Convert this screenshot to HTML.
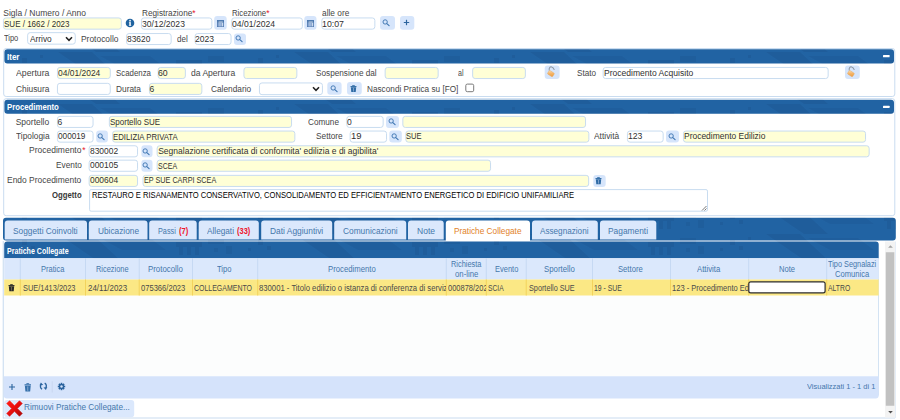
<!DOCTYPE html>
<html lang="it"><head><meta charset="utf-8"><title>Pratiche Collegate</title>
<style>
html,body{margin:0;padding:0;background:#fff}
body{width:900px;height:420px;position:relative;overflow:hidden;font-family:"Liberation Sans", sans-serif;}
.b{position:absolute;display:block}
.t{position:absolute;white-space:nowrap;line-height:12px;height:12px;overflow:visible}
.c{overflow:hidden}
.t span{display:inline-block;transform-origin:0 50%}
b.r{color:#e8112d}
</style></head>
<body>
<svg class="b" style="left:0;top:0" width="900" height="420" viewBox="0 0 900 420">
<defs><pattern id="tx" width="236" height="26" patternUnits="userSpaceOnUse"><path d="M58 0 L92 0 L120 26 L96 26 Z" fill="#0b2a55" opacity=".10"/><path d="M100 4 L150 4 L166 16 L122 16 Z" fill="#0b2a55" opacity=".08"/><path d="M22 6 h5 v5 h-5z M31 12 h4 v4 h-4z M40 3 h3 v3 h-3z M12 14 h3 v3 h-3z" fill="#0b2a55" opacity=".10"/><path d="M176 8 h26 v5 h-3 v8 h-4 v-8 h-4 v8 h-4 v-8 h-4 v8 h-4 v-8 h-3z" fill="#0b2a55" opacity=".10"/><path d="M208 4 h16 v6 h-16z M214 14 h4 v4 h-4z M226 12 h6 v8 h-6z" fill="#0b2a55" opacity=".09"/></pattern><linearGradient id="lg" x1="0" y1="0" x2="1" y2="1"><stop offset="0" stop-color="#fde6c0"/><stop offset=".45" stop-color="#f6b76c"/><stop offset="1" stop-color="#ea9b40"/></linearGradient></defs>
<path d="M5.95 17.95H118.85A2.5 2.5 0 0 1 121.35 20.45V26.65A2.5 2.5 0 0 1 118.85 29.15H5.95A2.5 2.5 0 0 1 3.45 26.65V20.45A2.5 2.5 0 0 1 5.95 17.95Z" fill="#ffffd6" stroke="#c8dcf0" stroke-width="1"/>
<path d="M143.95 17.95H209.35A2.5 2.5 0 0 1 211.85 20.45V26.65A2.5 2.5 0 0 1 209.35 29.15H143.95A2.5 2.5 0 0 1 141.45 26.65V20.45A2.5 2.5 0 0 1 143.95 17.95Z" fill="#fff" stroke="#c8dcf0" stroke-width="1"/>
<path d="M217.2 16.1H223.7A3 3 0 0 1 226.7 19.1V26.7A3 3 0 0 1 223.7 29.7H217.2A3 3 0 0 1 214.2 26.7V19.1A3 3 0 0 1 217.2 16.1Z" fill="#d6e5fb"/>
<path d="M234.25 17.95H299.85A2.5 2.5 0 0 1 302.35 20.45V26.65A2.5 2.5 0 0 1 299.85 29.15H234.25A2.5 2.5 0 0 1 231.75 26.65V20.45A2.5 2.5 0 0 1 234.25 17.95Z" fill="#fff" stroke="#c8dcf0" stroke-width="1"/>
<path d="M307.3 16.1H313.5A3 3 0 0 1 316.5 19.1V26.7A3 3 0 0 1 313.5 29.7H307.3A3 3 0 0 1 304.3 26.7V19.1A3 3 0 0 1 307.3 16.1Z" fill="#d6e5fb"/>
<path d="M324.35 17.95H372.35A2.5 2.5 0 0 1 374.85 20.45V26.65A2.5 2.5 0 0 1 372.35 29.15H324.35A2.5 2.5 0 0 1 321.85 26.65V20.45A2.5 2.5 0 0 1 324.35 17.95Z" fill="#fff" stroke="#c8dcf0" stroke-width="1"/>
<path d="M383 16.1H392A3 3 0 0 1 395 19.1V26.7A3 3 0 0 1 392 29.7H383A3 3 0 0 1 380 26.7V19.1A3 3 0 0 1 383 16.1Z" fill="#d6e5fb"/>
<path d="M403 16.1H411.3A3 3 0 0 1 414.3 19.1V26.7A3 3 0 0 1 411.3 29.7H403A3 3 0 0 1 400 26.7V19.1A3 3 0 0 1 403 16.1Z" fill="#d6e5fb"/>
<path d="M405.9 19.8H407.1V25.2H405.9V19.8Z" fill="#2b649e"/>
<path d="M403.8 22H409.2V23H403.8V22Z" fill="#2b649e"/>
<path d="M30.15 32.65H72.75A2.5 2.5 0 0 1 75.25 35.15V41.65A2.5 2.5 0 0 1 72.75 44.15H30.15A2.5 2.5 0 0 1 27.65 41.65V35.15A2.5 2.5 0 0 1 30.15 32.65Z" fill="#fff" stroke="#c8dcf0" stroke-width="1"/>
<path d="M129.05 33.55H168.65A2.5 2.5 0 0 1 171.15 36.05V42.05A2.5 2.5 0 0 1 168.65 44.55H129.05A2.5 2.5 0 0 1 126.55 42.05V36.05A2.5 2.5 0 0 1 129.05 33.55Z" fill="#fff" stroke="#c8dcf0" stroke-width="1"/>
<path d="M197.65 33.55H228.55A2.5 2.5 0 0 1 231.05 36.05V42.05A2.5 2.5 0 0 1 228.55 44.55H197.65A2.5 2.5 0 0 1 195.15 42.05V36.05A2.5 2.5 0 0 1 197.65 33.55Z" fill="#fff" stroke="#c8dcf0" stroke-width="1"/>
<path d="M237 33.4H243A3 3 0 0 1 246 36.4V41.9A3 3 0 0 1 243 44.9H237A3 3 0 0 1 234 41.9V36.4A3 3 0 0 1 237 33.4Z" fill="#d6e5fb"/>
<path d="M6.2 48.5H892.3A2.5 2.5 0 0 1 894.8 51V94A2.5 2.5 0 0 1 892.3 96.5H6.2A2.5 2.5 0 0 1 3.7 94V51A2.5 2.5 0 0 1 6.2 48.5Z" fill="#fff" stroke="#c9dcf0" stroke-width="1"/>
<path d="M7.4 49.2H891A3 3 0 0 1 894 52.2V60.5A3 3 0 0 1 891 63.5H7.4A3 3 0 0 1 4.4 60.5V52.2A3 3 0 0 1 7.4 49.2Z" fill="#2163a3"/>
<path d="M7.4 49.2H891A3 3 0 0 1 894 52.2V60.5A3 3 0 0 1 891 63.5H7.4A3 3 0 0 1 4.4 60.5V52.2A3 3 0 0 1 7.4 49.2Z" fill="url(#tx)"/>
<path d="M883.5 55.1H889.1A0.5 0.5 0 0 1 889.6 55.6V56.8A0.5 0.5 0 0 1 889.1 57.3H883.5A0.5 0.5 0 0 1 883 56.8V55.6A0.5 0.5 0 0 1 883.5 55.1Z" fill="#fff"/>
<path d="M59.95 67.45H107.75A2.5 2.5 0 0 1 110.25 69.95V76.05A2.5 2.5 0 0 1 107.75 78.55H59.95A2.5 2.5 0 0 1 57.45 76.05V69.95A2.5 2.5 0 0 1 59.95 67.45Z" fill="#ffffd6" stroke="#c8dcf0" stroke-width="1"/>
<path d="M160.65 67.45H182.85A2.5 2.5 0 0 1 185.35 69.95V76.05A2.5 2.5 0 0 1 182.85 78.55H160.65A2.5 2.5 0 0 1 158.15 76.05V69.95A2.5 2.5 0 0 1 160.65 67.45Z" fill="#ffffd6" stroke="#c8dcf0" stroke-width="1"/>
<path d="M246.45 67.45H294.35A2.5 2.5 0 0 1 296.85 69.95V76.05A2.5 2.5 0 0 1 294.35 78.55H246.45A2.5 2.5 0 0 1 243.95 76.05V69.95A2.5 2.5 0 0 1 246.45 67.45Z" fill="#ffffd6" stroke="#c8dcf0" stroke-width="1"/>
<path d="M387.65 67.45H435.65A2.5 2.5 0 0 1 438.15 69.95V76.05A2.5 2.5 0 0 1 435.65 78.55H387.65A2.5 2.5 0 0 1 385.15 76.05V69.95A2.5 2.5 0 0 1 387.65 67.45Z" fill="#ffffd6" stroke="#c8dcf0" stroke-width="1"/>
<path d="M475.15 67.45H522.85A2.5 2.5 0 0 1 525.35 69.95V76.05A2.5 2.5 0 0 1 522.85 78.55H475.15A2.5 2.5 0 0 1 472.65 76.05V69.95A2.5 2.5 0 0 1 475.15 67.45Z" fill="#ffffd6" stroke="#c8dcf0" stroke-width="1"/>
<path d="M547.7 65.4H556.6A3 3 0 0 1 559.6 68.4V75.9A3 3 0 0 1 556.6 78.9H547.7A3 3 0 0 1 544.7 75.9V68.4A3 3 0 0 1 547.7 65.4Z" fill="#d6e5fb"/>
<path d="M605.65 67.45H825.65A2.5 2.5 0 0 1 828.15 69.95V76.05A2.5 2.5 0 0 1 825.65 78.55H605.65A2.5 2.5 0 0 1 603.15 76.05V69.95A2.5 2.5 0 0 1 605.65 67.45Z" fill="#fff" stroke="#c8dcf0" stroke-width="1"/>
<path d="M848 65.4H856.8A3 3 0 0 1 859.8 68.4V75.9A3 3 0 0 1 856.8 78.9H848A3 3 0 0 1 845 75.9V68.4A3 3 0 0 1 848 65.4Z" fill="#d6e5fb"/>
<path d="M59.95 83.35H107.75A2.5 2.5 0 0 1 110.25 85.85V91.95A2.5 2.5 0 0 1 107.75 94.45H59.95A2.5 2.5 0 0 1 57.45 91.95V85.85A2.5 2.5 0 0 1 59.95 83.35Z" fill="#fff" stroke="#c8dcf0" stroke-width="1"/>
<path d="M151.95 83.35H199.35A2.5 2.5 0 0 1 201.85 85.85V91.95A2.5 2.5 0 0 1 199.35 94.45H151.95A2.5 2.5 0 0 1 149.45 91.95V85.85A2.5 2.5 0 0 1 151.95 83.35Z" fill="#ffffd6" stroke="#c8dcf0" stroke-width="1"/>
<path d="M261.95 82.95H319.95A2.5 2.5 0 0 1 322.45 85.45V92.15A2.5 2.5 0 0 1 319.95 94.65H261.95A2.5 2.5 0 0 1 259.45 92.15V85.45A2.5 2.5 0 0 1 261.95 82.95Z" fill="#fff" stroke="#c8dcf0" stroke-width="1"/>
<path d="M330.3 81.9H338.6A3 3 0 0 1 341.6 84.9V91.75A3 3 0 0 1 338.6 94.75H330.3A3 3 0 0 1 327.3 91.75V84.9A3 3 0 0 1 330.3 81.9Z" fill="#d6e5fb"/>
<path d="M350 81.9H358.75A3 3 0 0 1 361.75 84.9V91.75A3 3 0 0 1 358.75 94.75H350A3 3 0 0 1 347 91.75V84.9A3 3 0 0 1 350 81.9Z" fill="#d6e5fb"/>
<path d="M467.3 84.1H472.2A1.5 1.5 0 0 1 473.7 85.6V90.2A1.5 1.5 0 0 1 472.2 91.7H467.3A1.5 1.5 0 0 1 465.8 90.2V85.6A1.5 1.5 0 0 1 467.3 84.1Z" fill="#fff" stroke="#7a7a7a" stroke-width="1"/>
<path d="M6.2 98.7H892.3A2.5 2.5 0 0 1 894.8 101.2V213.2A2.5 2.5 0 0 1 892.3 215.7H6.2A2.5 2.5 0 0 1 3.7 213.2V101.2A2.5 2.5 0 0 1 6.2 98.7Z" fill="#fff" stroke="#c9dcf0" stroke-width="1"/>
<path d="M7.4 99.8H891A3 3 0 0 1 894 102.8V110.7A3 3 0 0 1 891 113.7H7.4A3 3 0 0 1 4.4 110.7V102.8A3 3 0 0 1 7.4 99.8Z" fill="#2163a3"/>
<path d="M7.4 99.8H891A3 3 0 0 1 894 102.8V110.7A3 3 0 0 1 891 113.7H7.4A3 3 0 0 1 4.4 110.7V102.8A3 3 0 0 1 7.4 99.8Z" fill="url(#tx)"/>
<path d="M883.5 105.7H889.1A0.5 0.5 0 0 1 889.6 106.2V107.4A0.5 0.5 0 0 1 889.1 107.9H883.5A0.5 0.5 0 0 1 883 107.4V106.2A0.5 0.5 0 0 1 883.5 105.7Z" fill="#fff"/>
<path d="M59.95 116.35H90.55A2.5 2.5 0 0 1 93.05 118.85V124.95A2.5 2.5 0 0 1 90.55 127.45H59.95A2.5 2.5 0 0 1 57.45 124.95V118.85A2.5 2.5 0 0 1 59.95 116.35Z" fill="#fff" stroke="#c8dcf0" stroke-width="1"/>
<path d="M111.85 116.35H289.05A2.5 2.5 0 0 1 291.55 118.85V124.95A2.5 2.5 0 0 1 289.05 127.45H111.85A2.5 2.5 0 0 1 109.35 124.95V118.85A2.5 2.5 0 0 1 111.85 116.35Z" fill="#ffffd6" stroke="#c8dcf0" stroke-width="1"/>
<path d="M349.35 116.35H380.65A2.5 2.5 0 0 1 383.15 118.85V124.95A2.5 2.5 0 0 1 380.65 127.45H349.35A2.5 2.5 0 0 1 346.85 124.95V118.85A2.5 2.5 0 0 1 349.35 116.35Z" fill="#fff" stroke="#c8dcf0" stroke-width="1"/>
<path d="M389 115.9H396A3 3 0 0 1 399 118.9V124.9A3 3 0 0 1 396 127.9H389A3 3 0 0 1 386 124.9V118.9A3 3 0 0 1 389 115.9Z" fill="#d6e5fb"/>
<path d="M405.35 116.35H583.05A2.5 2.5 0 0 1 585.55 118.85V124.95A2.5 2.5 0 0 1 583.05 127.45H405.35A2.5 2.5 0 0 1 402.85 124.95V118.85A2.5 2.5 0 0 1 405.35 116.35Z" fill="#ffffd6" stroke="#c8dcf0" stroke-width="1"/>
<path d="M59.95 131.05H90.55A2.5 2.5 0 0 1 93.05 133.55V139.65A2.5 2.5 0 0 1 90.55 142.15H59.95A2.5 2.5 0 0 1 57.45 139.65V133.55A2.5 2.5 0 0 1 59.95 131.05Z" fill="#fff" stroke="#c8dcf0" stroke-width="1"/>
<path d="M99.2 130.6H104.9A3 3 0 0 1 107.9 133.6V139.6A3 3 0 0 1 104.9 142.6H99.2A3 3 0 0 1 96.2 139.6V133.6A3 3 0 0 1 99.2 130.6Z" fill="#d6e5fb"/>
<path d="M115.15 131.05H292.35A2.5 2.5 0 0 1 294.85 133.55V139.65A2.5 2.5 0 0 1 292.35 142.15H115.15A2.5 2.5 0 0 1 112.65 139.65V133.55A2.5 2.5 0 0 1 115.15 131.05Z" fill="#ffffd6" stroke="#c8dcf0" stroke-width="1"/>
<path d="M352.65 131.05H384.05A2.5 2.5 0 0 1 386.55 133.55V139.65A2.5 2.5 0 0 1 384.05 142.15H352.65A2.5 2.5 0 0 1 350.15 139.65V133.55A2.5 2.5 0 0 1 352.65 131.05Z" fill="#fff" stroke="#c8dcf0" stroke-width="1"/>
<path d="M392.3 130.6H398.8A3 3 0 0 1 401.8 133.6V139.6A3 3 0 0 1 398.8 142.6H392.3A3 3 0 0 1 389.3 139.6V133.6A3 3 0 0 1 392.3 130.6Z" fill="#d6e5fb"/>
<path d="M408.35 131.05H586.35A2.5 2.5 0 0 1 588.85 133.55V139.65A2.5 2.5 0 0 1 586.35 142.15H408.35A2.5 2.5 0 0 1 405.85 139.65V133.55A2.5 2.5 0 0 1 408.35 131.05Z" fill="#ffffd6" stroke="#c8dcf0" stroke-width="1"/>
<path d="M629.95 131.05H660.65A2.5 2.5 0 0 1 663.15 133.55V139.65A2.5 2.5 0 0 1 660.65 142.15H629.95A2.5 2.5 0 0 1 627.45 139.65V133.55A2.5 2.5 0 0 1 629.95 131.05Z" fill="#fff" stroke="#c8dcf0" stroke-width="1"/>
<path d="M669 130.6H676A3 3 0 0 1 679 133.6V139.6A3 3 0 0 1 676 142.6H669A3 3 0 0 1 666 139.6V133.6A3 3 0 0 1 669 130.6Z" fill="#d6e5fb"/>
<path d="M685.95 131.05H863.05A2.5 2.5 0 0 1 865.55 133.55V139.65A2.5 2.5 0 0 1 863.05 142.15H685.95A2.5 2.5 0 0 1 683.45 139.65V133.55A2.5 2.5 0 0 1 685.95 131.05Z" fill="#ffffd6" stroke="#c8dcf0" stroke-width="1"/>
<path d="M91.65 145.75H135.05A2.5 2.5 0 0 1 137.55 148.25V154.35A2.5 2.5 0 0 1 135.05 156.85H91.65A2.5 2.5 0 0 1 89.15 154.35V148.25A2.5 2.5 0 0 1 91.65 145.75Z" fill="#fff" stroke="#c8dcf0" stroke-width="1"/>
<path d="M144.4 145.3H149.5A3 3 0 0 1 152.5 148.3V154.3A3 3 0 0 1 149.5 157.3H144.4A3 3 0 0 1 141.4 154.3V148.3A3 3 0 0 1 144.4 145.3Z" fill="#d6e5fb"/>
<path d="M159.65 145.75H866.65A2.5 2.5 0 0 1 869.15 148.25V154.35A2.5 2.5 0 0 1 866.65 156.85H159.65A2.5 2.5 0 0 1 157.15 154.35V148.25A2.5 2.5 0 0 1 159.65 145.75Z" fill="#ffffd6" stroke="#c8dcf0" stroke-width="1"/>
<path d="M91.65 160.15H135.05A2.5 2.5 0 0 1 137.55 162.65V168.75A2.5 2.5 0 0 1 135.05 171.25H91.65A2.5 2.5 0 0 1 89.15 168.75V162.65A2.5 2.5 0 0 1 91.65 160.15Z" fill="#fff" stroke="#c8dcf0" stroke-width="1"/>
<path d="M144.4 159.7H149.5A3 3 0 0 1 152.5 162.7V168.7A3 3 0 0 1 149.5 171.7H144.4A3 3 0 0 1 141.4 168.7V162.7A3 3 0 0 1 144.4 159.7Z" fill="#d6e5fb"/>
<path d="M159.65 160.15H488.05A2.5 2.5 0 0 1 490.55 162.65V168.75A2.5 2.5 0 0 1 488.05 171.25H159.65A2.5 2.5 0 0 1 157.15 168.75V162.65A2.5 2.5 0 0 1 159.65 160.15Z" fill="#ffffd6" stroke="#c8dcf0" stroke-width="1"/>
<path d="M91.65 175.35H135.05A2.5 2.5 0 0 1 137.55 177.85V183.95A2.5 2.5 0 0 1 135.05 186.45H91.65A2.5 2.5 0 0 1 89.15 183.95V177.85A2.5 2.5 0 0 1 91.65 175.35Z" fill="#ffffd6" stroke="#c8dcf0" stroke-width="1"/>
<path d="M145.55 175.35H586.15A2.5 2.5 0 0 1 588.65 177.85V183.95A2.5 2.5 0 0 1 586.15 186.45H145.55A2.5 2.5 0 0 1 143.05 183.95V177.85A2.5 2.5 0 0 1 145.55 175.35Z" fill="#ffffd6" stroke="#c8dcf0" stroke-width="1"/>
<path d="M596.3 174.9H602.7A3 3 0 0 1 605.7 177.9V183.9A3 3 0 0 1 602.7 186.9H596.3A3 3 0 0 1 593.3 183.9V177.9A3 3 0 0 1 596.3 174.9Z" fill="#d6e5fb"/>
<path d="M91.1 189.6H706A1.5 1.5 0 0 1 707.5 191.1V209.7A1.5 1.5 0 0 1 706 211.2H91.1A1.5 1.5 0 0 1 89.6 209.7V191.1A1.5 1.5 0 0 1 91.1 189.6Z" fill="#fff" stroke="#c8dcf0" stroke-width="1"/>
<path d="M6 217.7H892.8A3 3 0 0 1 895.8 220.7V237.4A3 3 0 0 1 892.8 240.4H6A3 3 0 0 1 3 237.4V220.7A3 3 0 0 1 6 217.7Z" fill="#2163a3"/>
<path d="M6 217.7H892.8A3 3 0 0 1 895.8 220.7V237.4A3 3 0 0 1 892.8 240.4H6A3 3 0 0 1 3 237.4V220.7A3 3 0 0 1 6 217.7Z" fill="url(#tx)"/>
<path d="M7.7 220.4H84A3 3 0 0 1 87 223.4V239.6H4.7V223.4A3 3 0 0 1 7.7 220.4Z" fill="#dbe8fc"/>
<path d="M91.8 220.4H144.5A3 3 0 0 1 147.5 223.4V239.6H88.8V223.4A3 3 0 0 1 91.8 220.4Z" fill="#dbe8fc"/>
<path d="M152.2 220.4H193.7A3 3 0 0 1 196.7 223.4V239.6H149.2V223.4A3 3 0 0 1 152.2 220.4Z" fill="#dbe8fc"/>
<path d="M201.7 220.4H255.8A3 3 0 0 1 258.8 223.4V239.6H198.7V223.4A3 3 0 0 1 201.7 220.4Z" fill="#dbe8fc"/>
<path d="M264.2 220.4H329.2A3 3 0 0 1 332.2 223.4V239.6H261.2V223.4A3 3 0 0 1 264.2 220.4Z" fill="#dbe8fc"/>
<path d="M337.2 220.4H403.2A3 3 0 0 1 406.2 223.4V239.6H334.2V223.4A3 3 0 0 1 337.2 220.4Z" fill="#dbe8fc"/>
<path d="M411 220.4H440.7A3 3 0 0 1 443.7 223.4V239.6H408V223.4A3 3 0 0 1 411 220.4Z" fill="#dbe8fc"/>
<path d="M448.8 220.4H527A3 3 0 0 1 530 223.4V241H445.8V223.4A3 3 0 0 1 448.8 220.4Z" fill="#fff"/>
<path d="M535 220.4H594.8A3 3 0 0 1 597.8 223.4V239.6H532V223.4A3 3 0 0 1 535 220.4Z" fill="#dbe8fc"/>
<path d="M603 220.4H653.3A3 3 0 0 1 656.3 223.4V239.6H600V223.4A3 3 0 0 1 603 220.4Z" fill="#dbe8fc"/>
<path d="M2.7 241H3.8V418.5H2.7V241Z" fill="#c9dcf0"/>
<path d="M3 417.6H895V418.6H3V417.6Z" fill="#c9dcf0"/>
<path d="M4.2 279H878.7V376H4.2V279Z" fill="#fcfdfd"/>
<path d="M878.2 258H879V395.5H878.2V258Z" fill="#c9dcf0"/>
<path d="M7.2 241.5H875.7A3 3 0 0 1 878.7 244.5V258.3H4.2V244.5A3 3 0 0 1 7.2 241.5Z" fill="#2163a3"/>
<path d="M7.2 241.5H875.7A3 3 0 0 1 878.7 244.5V258.3H4.2V244.5A3 3 0 0 1 7.2 241.5Z" fill="url(#tx)"/>
<path d="M4.2 258.3H878.7V279.5H4.2V258.3Z" fill="#dbe8fc"/>
<path d="M19.8 258.3H20.8V279.5H19.8V258.3Z" fill="#c6d9f3"/>
<path d="M85 258.3H86V279.5H85V258.3Z" fill="#c6d9f3"/>
<path d="M138.7 258.3H139.7V279.5H138.7V258.3Z" fill="#c6d9f3"/>
<path d="M192 258.3H193V279.5H192V258.3Z" fill="#c6d9f3"/>
<path d="M257.2 258.3H258.2V279.5H257.2V258.3Z" fill="#c6d9f3"/>
<path d="M445.8 258.3H446.8V279.5H445.8V258.3Z" fill="#c6d9f3"/>
<path d="M485.8 258.3H486.8V279.5H485.8V258.3Z" fill="#c6d9f3"/>
<path d="M525.7 258.3H526.7V279.5H525.7V258.3Z" fill="#c6d9f3"/>
<path d="M592 258.3H593V279.5H592V258.3Z" fill="#c6d9f3"/>
<path d="M670 258.3H671V279.5H670V258.3Z" fill="#c6d9f3"/>
<path d="M748.2 258.3H749.2V279.5H748.2V258.3Z" fill="#c6d9f3"/>
<path d="M826.2 258.3H827.2V279.5H826.2V258.3Z" fill="#c6d9f3"/>
<path d="M4.2 279.5H878.7V295.6H4.2V279.5Z" fill="#fbe885"/>
<path d="M19.8 279.5H20.8V295.6H19.8V279.5Z" fill="#f3d35c"/>
<path d="M85 279.5H86V295.6H85V279.5Z" fill="#f3d35c"/>
<path d="M138.7 279.5H139.7V295.6H138.7V279.5Z" fill="#f3d35c"/>
<path d="M192 279.5H193V295.6H192V279.5Z" fill="#f3d35c"/>
<path d="M257.2 279.5H258.2V295.6H257.2V279.5Z" fill="#f3d35c"/>
<path d="M445.8 279.5H446.8V295.6H445.8V279.5Z" fill="#f3d35c"/>
<path d="M485.8 279.5H486.8V295.6H485.8V279.5Z" fill="#f3d35c"/>
<path d="M525.7 279.5H526.7V295.6H525.7V279.5Z" fill="#f3d35c"/>
<path d="M592 279.5H593V295.6H592V279.5Z" fill="#f3d35c"/>
<path d="M670 279.5H671V295.6H670V279.5Z" fill="#f3d35c"/>
<path d="M748.2 279.5H749.2V295.6H748.2V279.5Z" fill="#f3d35c"/>
<path d="M826.2 279.5H827.2V295.6H826.2V279.5Z" fill="#f3d35c"/>
<path d="M750.7 281.8H823.2A1.9 1.9 0 0 1 825.1 283.7V291A1.9 1.9 0 0 1 823.2 292.9H750.7A1.9 1.9 0 0 1 748.8 291V283.7A1.9 1.9 0 0 1 750.7 281.8Z" fill="#fff" stroke="#2b2b2b" stroke-width="1.2"/>
<path d="M3.8 376.2H878.7V395.4A3 3 0 0 1 875.7 398.4H6.8A3 3 0 0 1 3.8 395.4V376.2Z" fill="#d5e3fb"/>
<path d="M51.7 381.2H52.8V392.6H51.7V381.2Z" fill="#c9d8f2"/>
<path d="M7.2 400.1H131.2A3 3 0 0 1 134.2 403.1V414.2A3 3 0 0 1 131.2 417.2H7.2A3 3 0 0 1 4.2 414.2V403.1A3 3 0 0 1 7.2 400.1Z" fill="#dbe8fc"/>
<path d="M885 241.5H895.2V417.6H885V241.5Z" fill="#f3f3f3"/>
<path d="M895.2 241.5H896V418H895.2V241.5Z" fill="#dfe9f6"/>
<path d="M885.8 252.2H894.3V405.8H885.8V252.2Z" fill="#c1c1c1"/>
</svg>
<form aria-label="Pratica">
<div class="t" style="left:3.30px;top:6.75px;font-size:8.5px;color:#454545;"><span>Sigla / Numero / Anno</span></div>
<div class="t" style="left:3.80px;top:17.75px;font-size:8.5px;color:#303030;"><span style="transform:scaleX(0.9429)">SUE / 1662 / 2023</span></div>
<svg class="b" style="left:125.00px;top:18.00px" width="10" height="10" viewBox="0 0 10 10"><circle cx="5" cy="5" r="4.3" fill="#20639f"/><rect x="4.3" y="4.1" width="1.5" height="3.7" fill="#fff"/><rect x="3.9" y="4.1" width="1" height=".6" fill="#fff" opacity=".8"/><rect x="3.8" y="7.3" width="2.5" height=".6" fill="#fff" opacity=".8"/><circle cx="5.05" cy="2.7" r=".85" fill="#fff"/></svg>
<div class="t" style="left:141.70px;top:6.75px;font-size:8.5px;color:#454545;"><span style="transform:scaleX(0.9676)">Registrazione</span></div>
<div class="t" style="left:192.20px;top:6.75px;font-size:8.5px;color:#e8112d;"><span>*</span></div>
<div class="t" style="left:141.60px;top:17.75px;font-size:8.5px;color:#303030;"><span style="transform:scaleX(1.0083)">30/12/2023</span></div>
<svg class="b" style="left:217.00px;top:19.90px" width="7.4" height="7.4" viewBox="0 0 7.4 7.4"><rect x="0.35" y="0.35" width="6.6" height="6.5" fill="#7f9fcb" stroke="#4672aa" stroke-width=".7"/><rect x="0.6" y="0.6" width="6.1" height="1.9" fill="#3f6fa8"/><path d="M1.5 2 H5.9" stroke="#ffffff" stroke-width=".75"/><path d="M2.3 2.9 V6.4 M3.8 2.9 V6.4" stroke="#b9cceb" stroke-width=".7"/><path d="M5.45 3 V6.3" stroke="#f0f5fc" stroke-width=".75"/></svg>
<div class="t" style="left:231.80px;top:6.75px;font-size:8.5px;color:#454545;"><span style="transform:scaleX(0.9162)">Ricezione</span></div>
<div class="t" style="left:266.20px;top:6.75px;font-size:8.5px;color:#e8112d;"><span>*</span></div>
<div class="t" style="left:231.90px;top:17.75px;font-size:8.5px;color:#303030;"><span style="transform:scaleX(1.0130)">04/01/2024</span></div>
<svg class="b" style="left:306.90px;top:19.90px" width="7.4" height="7.4" viewBox="0 0 7.4 7.4"><rect x="0.35" y="0.35" width="6.6" height="6.5" fill="#7f9fcb" stroke="#4672aa" stroke-width=".7"/><rect x="0.6" y="0.6" width="6.1" height="1.9" fill="#3f6fa8"/><path d="M1.5 2 H5.9" stroke="#ffffff" stroke-width=".75"/><path d="M2.3 2.9 V6.4 M3.8 2.9 V6.4" stroke="#b9cceb" stroke-width=".7"/><path d="M5.45 3 V6.3" stroke="#f0f5fc" stroke-width=".75"/></svg>
<div class="t" style="left:322.00px;top:6.75px;font-size:8.5px;color:#454545;"><span style="transform:scaleX(0.9788)">alle ore</span></div>
<div class="t" style="left:322.00px;top:17.75px;font-size:8.5px;color:#303030;"><span style="transform:scaleX(1.0338)">10:07</span></div>
<svg class="b" style="left:382.20px;top:18.50px" width="9" height="8" viewBox="0 0 9 8"><circle cx="3.15" cy="2.95" r="2.15" fill="none" stroke="#3f76b2" stroke-width=".95"/><path d="M4.8 4.6 L7.1 6.6" stroke="#3f76b2" stroke-width="1.15" stroke-linecap="round"/></svg>
<div class="t" style="left:4.00px;top:31.85px;font-size:8.5px;color:#454545;"><span style="transform:scaleX(0.8808)">Tipo</span></div>
<div class="t" style="left:30.30px;top:32.85px;font-size:8.5px;color:#303030;"><span style="transform:scaleX(0.9773)">Arrivo</span></div>
<svg class="b" style="left:65.30px;top:35.80px" width="8" height="6" viewBox="0 0 8 6"><path d="M1.0 1.3 L4 4.3 L7.0 1.3" fill="none" stroke="#222" stroke-width="1.6"/></svg>
<div class="t" style="left:80.80px;top:32.65px;font-size:8.5px;color:#454545;"><span style="transform:scaleX(0.9917)">Protocollo</span></div>
<div class="t" style="left:126.70px;top:33.45px;font-size:8.5px;color:#303030;"><span style="transform:scaleX(0.9856)">83620</span></div>
<div class="t" style="left:177.00px;top:32.65px;font-size:8.5px;color:#454545;"><span style="transform:scaleX(0.9433)">del</span></div>
<div class="t" style="left:195.30px;top:33.45px;font-size:8.5px;color:#303030;"><span style="transform:scaleX(1.0041)">2023</span></div>
<svg class="b" style="left:235.40px;top:35.45px" width="9" height="8" viewBox="0 0 9 8"><circle cx="3.15" cy="2.95" r="2.15" fill="none" stroke="#3f76b2" stroke-width=".95"/><path d="M4.8 4.6 L7.1 6.6" stroke="#3f76b2" stroke-width="1.15" stroke-linecap="round"/></svg>
</form>
<section aria-label="Iter">
<div class="t" style="left:6.80px;top:50.75px;font-size:8.5px;color:#fff;font-weight:700;"><span style="transform:scaleX(0.9445)">Iter</span></div>
<div class="t" style="left:15.80px;top:66.85px;font-size:8.5px;color:#454545;"><span style="transform:scaleX(1.0242)">Apertura</span></div>
<div class="t" style="left:57.60px;top:67.05px;font-size:8.5px;color:#303030;"><span style="transform:scaleX(0.9942)">04/01/2024</span></div>
<div class="t" style="left:115.80px;top:66.85px;font-size:8.5px;color:#454545;"><span style="transform:scaleX(0.9256)">Scadenza</span></div>
<div class="t" style="left:158.30px;top:66.85px;font-size:8.5px;color:#303030;"><span style="transform:scaleX(1.0244)">60</span></div>
<div class="t" style="left:191.30px;top:66.85px;font-size:8.5px;color:#454545;"><span style="transform:scaleX(1.0056)">da Apertura</span></div>
<div class="t" style="left:316.30px;top:66.85px;font-size:8.5px;color:#454545;"><span style="transform:scaleX(0.9656)">Sospensione dal</span></div>
<div class="t" style="left:458.30px;top:66.85px;font-size:8.5px;color:#454545;"><span style="transform:scaleX(0.8302)">al</span></div>
<svg class="b" style="left:544.70px;top:65.40px" width="15" height="14" viewBox="0 0 15 14"><path d="M4.3 5.6 C3.6 3 5.2 1.5 6.6 1.9 C8 2.3 9 3.4 9.3 5" fill="none" stroke="#8f99a6" stroke-width="1.05"/><rect x="-3" y="-2.1" width="6" height="4.2" rx=".9" transform="translate(5.9 8.6) rotate(32)" fill="url(#lg)" stroke="#e7a252" stroke-width=".4"/></svg>
<div class="t" style="left:576.80px;top:66.85px;font-size:8.5px;color:#454545;"><span style="transform:scaleX(0.9567)">Stato</span></div>
<div class="t" style="left:604.30px;top:67.05px;font-size:8.5px;color:#303030;"><span style="transform:scaleX(1.0053)">Procedimento Acquisito</span></div>
<svg class="b" style="left:845.00px;top:65.40px" width="15" height="14" viewBox="0 0 15 14"><path d="M4.3 5.6 C3.6 3 5.2 1.5 6.6 1.9 C8 2.3 9 3.4 9.3 5" fill="none" stroke="#8f99a6" stroke-width="1.05"/><rect x="-3" y="-2.1" width="6" height="4.2" rx=".9" transform="translate(5.9 8.6) rotate(32)" fill="url(#lg)" stroke="#e7a252" stroke-width=".4"/></svg>
<div class="t" style="left:15.80px;top:82.75px;font-size:8.5px;color:#454545;"><span style="transform:scaleX(0.9815)">Chiusura</span></div>
<div class="t" style="left:115.80px;top:82.75px;font-size:8.5px;color:#454545;"><span style="transform:scaleX(0.9798)">Durata</span></div>
<div class="t" style="left:149.60px;top:82.75px;font-size:8.5px;color:#303030;"><span>6</span></div>
<div class="t" style="left:211.30px;top:82.75px;font-size:8.5px;color:#454545;"><span style="transform:scaleX(0.9775)">Calendario</span></div>
<svg class="b" style="left:312.00px;top:85.90px" width="8" height="6" viewBox="0 0 8 6"><path d="M1.0 1.3 L4 4.3 L7.0 1.3" fill="none" stroke="#222" stroke-width="1.6"/></svg>
<svg class="b" style="left:329.50px;top:84.53px" width="9" height="8" viewBox="0 0 9 8"><circle cx="3.15" cy="2.95" r="2.15" fill="none" stroke="#3f76b2" stroke-width=".95"/><path d="M4.8 4.6 L7.1 6.6" stroke="#3f76b2" stroke-width="1.15" stroke-linecap="round"/></svg>
<svg class="b" style="left:349.68px;top:84.52px" width="7.0" height="7.6" viewBox="0 0 7.0 7.6"><g transform="scale(1.000 1.000)"><path d="M0.5 1.55 H6.5" stroke="#2f6ba5" stroke-width="1.0"/><path d="M2.5 1 V0.5 H4.5 V1" stroke="#2f6ba5" stroke-width=".8" fill="none"/><path d="M0.8 2.3 H6.2 L5.7 7.2 H1.3 Z" fill="#2f6ba5"/><path d="M3.5 2.9 V6.6" stroke="#9db9dc" stroke-width=".7"/></g></svg>
<div class="t" style="left:366.80px;top:82.75px;font-size:8.5px;color:#454545;"><span style="transform:scaleX(0.9674)">Nascondi Pratica su [FO]</span></div>
</section>
<section aria-label="Procedimento">
<div class="t" style="left:6.80px;top:101.15px;font-size:8.5px;color:#fff;font-weight:700;"><span style="transform:scaleX(0.9138)">Procedimento</span></div>
<div class="t" style="left:15.70px;top:115.75px;font-size:8.5px;color:#454545;"><span>Sportello</span></div>
<div class="t" style="left:57.60px;top:115.95px;font-size:8.5px;color:#303030;"><span>6</span></div>
<div class="t" style="left:110.10px;top:115.95px;font-size:8.5px;color:#303030;"><span style="transform:scaleX(0.9402)">Sportello SUE</span></div>
<div class="t" style="left:308.30px;top:115.75px;font-size:8.5px;color:#454545;"><span style="transform:scaleX(0.9645)">Comune</span></div>
<div class="t" style="left:347.00px;top:115.95px;font-size:8.5px;color:#303030;"><span>0</span></div>
<svg class="b" style="left:387.90px;top:118.20px" width="9" height="8" viewBox="0 0 9 8"><circle cx="3.15" cy="2.95" r="2.15" fill="none" stroke="#3f76b2" stroke-width=".95"/><path d="M4.8 4.6 L7.1 6.6" stroke="#3f76b2" stroke-width="1.15" stroke-linecap="round"/></svg>
<div class="t" style="left:15.70px;top:130.15px;font-size:8.5px;color:#454545;"><span style="transform:scaleX(0.9828)">Tipologia</span></div>
<div class="t" style="left:57.60px;top:130.45px;font-size:8.5px;color:#303030;"><span style="transform:scaleX(0.9656)">000019</span></div>
<svg class="b" style="left:97.45px;top:132.90px" width="9" height="8" viewBox="0 0 9 8"><circle cx="3.15" cy="2.95" r="2.15" fill="none" stroke="#3f76b2" stroke-width=".95"/><path d="M4.8 4.6 L7.1 6.6" stroke="#3f76b2" stroke-width="1.15" stroke-linecap="round"/></svg>
<div class="t" style="left:113.30px;top:130.65px;font-size:8.5px;color:#303030;"><span style="transform:scaleX(0.9131)">EDILIZIA PRIVATA</span></div>
<div class="t" style="left:316.00px;top:130.15px;font-size:8.5px;color:#454545;"><span style="transform:scaleX(0.9742)">Settore</span></div>
<div class="t" style="left:351.00px;top:130.45px;font-size:8.5px;color:#303030;"><span style="transform:scaleX(1.1089)">19</span></div>
<svg class="b" style="left:390.95px;top:132.90px" width="9" height="8" viewBox="0 0 9 8"><circle cx="3.15" cy="2.95" r="2.15" fill="none" stroke="#3f76b2" stroke-width=".95"/><path d="M4.8 4.6 L7.1 6.6" stroke="#3f76b2" stroke-width="1.15" stroke-linecap="round"/></svg>
<div class="t" style="left:406.00px;top:130.45px;font-size:8.5px;color:#303030;"><span style="transform:scaleX(0.8865)">SUE</span></div>
<div class="t" style="left:594.30px;top:130.15px;font-size:8.5px;color:#454545;"><span style="transform:scaleX(0.9876)">Attività</span></div>
<div class="t" style="left:627.60px;top:130.45px;font-size:8.5px;color:#303030;"><span style="transform:scaleX(1.0150)">123</span></div>
<svg class="b" style="left:667.90px;top:132.90px" width="9" height="8" viewBox="0 0 9 8"><circle cx="3.15" cy="2.95" r="2.15" fill="none" stroke="#3f76b2" stroke-width=".95"/><path d="M4.8 4.6 L7.1 6.6" stroke="#3f76b2" stroke-width="1.15" stroke-linecap="round"/></svg>
<div class="t" style="left:683.60px;top:130.45px;font-size:8.5px;color:#303030;"><span style="transform:scaleX(0.9959)">Procedimento Edilizio</span></div>
<div class="t" style="left:29.00px;top:144.45px;font-size:8.5px;color:#454545;"><span>Procedimento</span></div>
<div class="t" style="left:82.30px;top:144.45px;font-size:8.5px;color:#e8112d;"><span>*</span></div>
<div class="t" style="left:89.70px;top:145.05px;font-size:8.5px;color:#303030;"><span style="transform:scaleX(0.9903)">830002</span></div>
<svg class="b" style="left:142.35px;top:147.60px" width="9" height="8" viewBox="0 0 9 8"><circle cx="3.15" cy="2.95" r="2.15" fill="none" stroke="#3f76b2" stroke-width=".95"/><path d="M4.8 4.6 L7.1 6.6" stroke="#3f76b2" stroke-width="1.15" stroke-linecap="round"/></svg>
<div class="t" style="left:158.20px;top:145.25px;font-size:8.5px;color:#303030;"><span>Segnalazione certificata di conformita' edilizia e di agibilita'</span></div>
<div class="t" style="left:55.70px;top:159.05px;font-size:8.5px;color:#454545;"><span style="transform:scaleX(0.9747)">Evento</span></div>
<div class="t" style="left:89.70px;top:159.45px;font-size:8.5px;color:#303030;"><span style="transform:scaleX(0.9903)">000105</span></div>
<svg class="b" style="left:142.35px;top:162.00px" width="9" height="8" viewBox="0 0 9 8"><circle cx="3.15" cy="2.95" r="2.15" fill="none" stroke="#3f76b2" stroke-width=".95"/><path d="M4.8 4.6 L7.1 6.6" stroke="#3f76b2" stroke-width="1.15" stroke-linecap="round"/></svg>
<div class="t" style="left:158.20px;top:159.85px;font-size:8.5px;color:#303030;"><span style="transform:scaleX(0.8248)">SCEA</span></div>
<div class="t" style="left:7.30px;top:173.75px;font-size:8.5px;color:#454545;"><span style="transform:scaleX(0.9937)">Endo Procedimento</span></div>
<div class="t" style="left:89.70px;top:174.15px;font-size:8.5px;color:#303030;"><span style="transform:scaleX(0.9903)">000604</span></div>
<div class="t" style="left:143.80px;top:174.45px;font-size:8.5px;color:#303030;"><span style="transform:scaleX(0.8507)">EP SUE CARPI SCEA</span></div>
<svg class="b" style="left:594.80px;top:177.10px" width="7.0" height="7.6" viewBox="0 0 7.0 7.6"><g transform="scale(1.000 1.000)"><path d="M0.5 1.55 H6.5" stroke="#2f6ba5" stroke-width="1.0"/><path d="M2.5 1 V0.5 H4.5 V1" stroke="#2f6ba5" stroke-width=".8" fill="none"/><path d="M0.8 2.3 H6.2 L5.7 7.2 H1.3 Z" fill="#2f6ba5"/><path d="M3.5 2.9 V6.6" stroke="#9db9dc" stroke-width=".7"/></g></svg>
<div class="t" style="left:51.70px;top:188.65px;font-size:8.5px;color:#383838;font-weight:700;"><span style="transform:scaleX(0.9086)">Oggetto</span></div>
<div class="t" style="left:91.90px;top:189.05px;font-size:8.5px;color:#000;"><span style="transform:scaleX(0.8944)">RESTAURO E RISANAMENTO CONSERVATIVO, CONSOLIDAMENTO ED EFFICIENTAMENTO ENERGETICO DI EDIFICIO UNIFAMILIARE</span></div>
<svg class="b" style="left:701.00px;top:204.70px" width="6" height="6" viewBox="0 0 6 6"><path d="M5.5 1 L1 5.5 M5.5 3.5 L3.5 5.5" stroke="#555" stroke-width=".8"/></svg>
</section>
<nav aria-label="Schede">
<div class="t" style="left:13.30px;top:224.88px;font-size:9px;color:#4577ab;"><span style="transform:scaleX(0.9237)">Soggetti Coinvolti</span></div>
<div class="t" style="left:97.50px;top:224.88px;font-size:9px;color:#4577ab;"><span style="transform:scaleX(0.9207)">Ubicazione</span></div>
<div class="t" style="left:158.00px;top:224.88px;font-size:9px;color:#4577ab;"><span style="transform:scaleX(0.8085)">Passi</span></div>
<div class="t" style="left:178.70px;top:224.88px;font-size:9px;color:#f0142a;font-weight:700;"><span style="transform:scaleX(0.8455)">(7)</span></div>
<div class="t" style="left:207.20px;top:224.88px;font-size:9px;color:#4577ab;"><span style="transform:scaleX(0.9143)">Allegati</span></div>
<div class="t" style="left:236.70px;top:224.88px;font-size:9px;color:#f0142a;font-weight:700;"><span style="transform:scaleX(0.8304)">(33)</span></div>
<div class="t" style="left:269.80px;top:224.88px;font-size:9px;color:#4577ab;"><span style="transform:scaleX(0.9326)">Dati Aggiuntivi</span></div>
<div class="t" style="left:342.50px;top:224.88px;font-size:9px;color:#4577ab;"><span style="transform:scaleX(0.9266)">Comunicazioni</span></div>
<div class="t" style="left:416.70px;top:224.88px;font-size:9px;color:#4577ab;"><span style="transform:scaleX(0.9466)">Note</span></div>
<div class="t" style="left:453.70px;top:224.88px;font-size:9px;color:#e2822a;"><span style="transform:scaleX(0.9178)">Pratiche Collegate</span></div>
<div class="t" style="left:540.30px;top:224.88px;font-size:9px;color:#4577ab;"><span style="transform:scaleX(0.9057)">Assegnazioni</span></div>
<div class="t" style="left:607.80px;top:224.88px;font-size:9px;color:#4577ab;"><span style="transform:scaleX(0.9296)">Pagamenti</span></div>
</nav>
<section aria-label="Pratiche Collegate">
<div class="t" style="left:6.70px;top:244.95px;font-size:8.5px;color:#fff;font-weight:700;"><span style="transform:scaleX(0.8305)">Pratiche Collegate</span></div>
<div class="t" style="left:41.30px;top:262.85px;font-size:8.5px;color:#4577ab;"><span style="transform:scaleX(0.8841)">Pratica</span></div>
<div class="t" style="left:95.80px;top:262.85px;font-size:8.5px;color:#4577ab;"><span style="transform:scaleX(0.8707)">Ricezione</span></div>
<div class="t" style="left:147.80px;top:262.85px;font-size:8.5px;color:#4577ab;"><span style="transform:scaleX(0.9256)">Protocollo</span></div>
<div class="t" style="left:217.20px;top:262.85px;font-size:8.5px;color:#4577ab;"><span style="transform:scaleX(0.8932)">Tipo</span></div>
<div class="t" style="left:327.80px;top:262.85px;font-size:8.5px;color:#4577ab;"><span style="transform:scaleX(0.9094)">Procedimento</span></div>
<div class="t" style="left:450.80px;top:258.25px;font-size:8.5px;color:#4577ab;"><span style="transform:scaleX(0.8693)">Richiesta</span></div>
<div class="t" style="left:454.70px;top:267.85px;font-size:8.5px;color:#4577ab;"><span style="transform:scaleX(0.9126)">on-line</span></div>
<div class="t" style="left:494.70px;top:262.85px;font-size:8.5px;color:#4577ab;"><span style="transform:scaleX(0.8803)">Evento</span></div>
<div class="t" style="left:543.70px;top:262.85px;font-size:8.5px;color:#4577ab;"><span style="transform:scaleX(0.9177)">Sportello</span></div>
<div class="t" style="left:618.30px;top:262.85px;font-size:8.5px;color:#4577ab;"><span style="transform:scaleX(0.9013)">Settore</span></div>
<div class="t" style="left:697.20px;top:262.85px;font-size:8.5px;color:#4577ab;"><span style="transform:scaleX(0.9132)">Attivita</span></div>
<div class="t" style="left:778.70px;top:262.85px;font-size:8.5px;color:#4577ab;"><span style="transform:scaleX(0.8904)">Note</span></div>
<div class="t" style="left:828.00px;top:258.25px;font-size:8.5px;color:#4577ab;"><span style="transform:scaleX(0.8619)">Tipo Segnalazi</span></div>
<div class="t" style="left:835.00px;top:267.85px;font-size:8.5px;color:#4577ab;"><span style="transform:scaleX(0.8934)">Comunica</span></div>
<svg class="b" style="left:8.10px;top:284.20px" width="7.0" height="7.6" viewBox="0 0 7.0 7.6"><g transform="scale(1.000 1.000)"><path d="M0.5 1.55 H6.5" stroke="#2a2a2a" stroke-width="1.0"/><path d="M2.5 1 V0.5 H4.5 V1" stroke="#2a2a2a" stroke-width=".8" fill="none"/><path d="M0.8 2.3 H6.2 L5.7 7.2 H1.3 Z" fill="#2a2a2a"/><path d="M3.5 2.9 V6.6" stroke="#8a8060" stroke-width=".7"/></g></svg>
<div class="t" style="left:22.50px;top:281.95px;font-size:8.5px;color:#4a4a4a;"><span style="transform:scaleX(0.8745)">SUE/1413/2023</span></div>
<div class="t" style="left:87.80px;top:281.95px;font-size:8.5px;color:#4a4a4a;"><span style="transform:scaleX(0.9351)">24/11/2023</span></div>
<div class="t" style="left:140.70px;top:281.95px;font-size:8.5px;color:#4a4a4a;"><span style="transform:scaleX(0.8924)">075366/2023</span></div>
<div class="t" style="left:194.30px;top:281.95px;font-size:8.5px;color:#4a4a4a;"><span style="transform:scaleX(0.8203)">COLLEGAMENTO</span></div>
<div class="t c" style="left:259.30px;top:281.95px;font-size:8.5px;color:#4a4a4a;width:186.40px;"><span style="transform:scaleX(0.9066)">830001 - Titolo edilizio o istanza di conferenza di servizi</span></div>
<div class="t c" style="left:447.70px;top:281.95px;font-size:8.5px;color:#4a4a4a;width:38.00px;"><span style="transform:scaleX(0.8823)">000878/2023</span></div>
<div class="t" style="left:488.30px;top:281.95px;font-size:8.5px;color:#4a4a4a;"><span style="transform:scaleX(0.7912)">SCIA</span></div>
<div class="t" style="left:529.30px;top:281.95px;font-size:8.5px;color:#4a4a4a;"><span style="transform:scaleX(0.8560)">Sportello SUE</span></div>
<div class="t" style="left:594.20px;top:281.95px;font-size:8.5px;color:#4a4a4a;"><span style="transform:scaleX(0.8058)">19 - SUE</span></div>
<div class="t c" style="left:671.50px;top:281.95px;font-size:8.5px;color:#4a4a4a;width:76.70px;"><span style="transform:scaleX(0.8861)">123 - Procedimento Edilizio</span></div>
<div class="t" style="left:828.20px;top:281.95px;font-size:8.5px;color:#4a4a4a;"><span style="transform:scaleX(0.8009)">ALTRO</span></div>
</section>
<footer aria-label="Pager">
<svg class="b" style="left:7.10px;top:382.10px" width="10" height="10" viewBox="0 0 10 10"><path d="M5 2.0 V8.0 M2.0 5 H8.0" stroke="#2b649e" stroke-width="1.1"/></svg>
<svg class="b" style="left:24.00px;top:382.50px" width="7.56" height="9.05" viewBox="0 0 7.56 9.05"><g transform="scale(1.081 1.191)"><path d="M0.5 1.55 H6.5" stroke="#3670aa" stroke-width="1.0"/><path d="M2.5 1 V0.5 H4.5 V1" stroke="#3670aa" stroke-width=".8" fill="none"/><path d="M0.8 2.3 H6.2 L5.7 7.2 H1.3 Z" fill="#3670aa"/><path d="M3.5 2.9 V6.6" stroke="#9db9dc" stroke-width=".7"/></g></svg>
<svg class="b" style="left:38.60px;top:382.40px" width="9.4" height="8.6" viewBox="0 0 9.4 8.6"><path d="M3.1 7.2 C1.3 6.3 1.1 4 1.9 2.6" fill="none" stroke="#2b649e" stroke-width="1.35"/><path d="M0.5 3.3 L4.3 2.9 L1.9 0.4 Z" fill="#2b649e"/><path d="M5.7 1.1 C7.5 2 7.7 4.3 6.9 5.7" fill="none" stroke="#2b649e" stroke-width="1.35"/><path d="M8.3 5 L4.5 5.4 L6.9 7.9 Z" fill="#2b649e"/></svg>
<svg class="b" style="left:57.10px;top:382.40px" width="9" height="9" viewBox="0 0 9 9"><g transform="translate(4.5 4.5)"><rect x="-0.8" y="-3.7" width="1.6" height="2" transform="rotate(0)" fill="#2b649e"/><rect x="-0.8" y="-3.7" width="1.6" height="2" transform="rotate(45)" fill="#2b649e"/><rect x="-0.8" y="-3.7" width="1.6" height="2" transform="rotate(90)" fill="#2b649e"/><rect x="-0.8" y="-3.7" width="1.6" height="2" transform="rotate(135)" fill="#2b649e"/><rect x="-0.8" y="-3.7" width="1.6" height="2" transform="rotate(180)" fill="#2b649e"/><rect x="-0.8" y="-3.7" width="1.6" height="2" transform="rotate(225)" fill="#2b649e"/><rect x="-0.8" y="-3.7" width="1.6" height="2" transform="rotate(270)" fill="#2b649e"/><rect x="-0.8" y="-3.7" width="1.6" height="2" transform="rotate(315)" fill="#2b649e"/><circle r="2.7" fill="#2b649e"/><circle r="1.2" fill="#d5e3fb"/></g></svg>
<div class="t" style="left:807.20px;top:381.03px;font-size:8px;color:#4577ab;"><span style="transform:scaleX(0.9326)">Visualizzati 1 - 1 di 1</span></div>
<svg class="b" style="left:5.50px;top:400.20px" width="17" height="17" viewBox="0 0 17 17"><defs><linearGradient id="xg" gradientUnits="userSpaceOnUse" x1="2" y1="2" x2="15" y2="15"><stop offset="0" stop-color="#ff1a14"/><stop offset=".5" stop-color="#e60f0f"/><stop offset="1" stop-color="#b00808"/></linearGradient></defs><path d="M16.28 3.55 L11.33 8.50 L16.28 13.45 L13.45 16.28 L8.50 11.33 L3.55 16.28 L0.72 13.45 L5.67 8.50 L0.72 3.55 L3.55 0.72 L8.50 5.67 L13.45 0.72Z" fill="url(#xg)" stroke="url(#xg)" stroke-width=".6" stroke-linejoin="round"/></svg>
<div class="t" style="left:24.20px;top:401.35px;font-size:8.5px;color:#4577ab;"><span style="transform:scaleX(0.9652)">Rimuovi Pratiche Collegate...</span></div>
<svg class="b" style="left:886.50px;top:244.00px" width="7" height="5" viewBox="0 0 7 5"><path d="M1.1 3.8 L3.5 1.3 L5.9 3.8 Z" fill="#a3a3a3"/></svg>
<svg class="b" style="left:886.60px;top:409.80px" width="7" height="5" viewBox="0 0 7 5"><path d="M1.2 1.1 L3.5 3.6 L5.8 1.1 Z" fill="#505050"/></svg>
</footer>
</body></html>
